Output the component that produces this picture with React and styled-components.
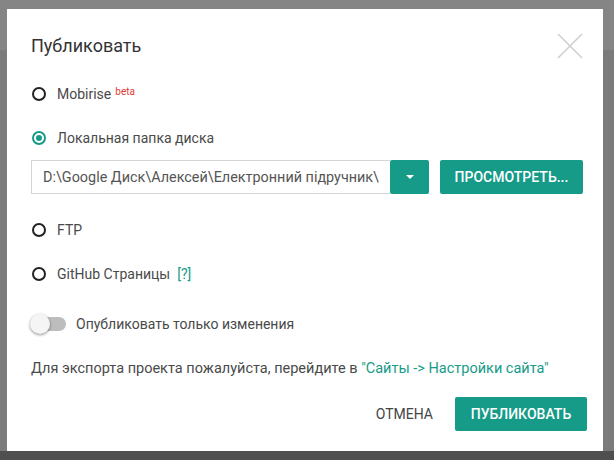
import React, { useState } from "react";
import styled, { createGlobalStyle } from "styled-components";

const GlobalStyle = createGlobalStyle`
  html, body {
    margin: 0;
    padding: 0;
  }
  body {
    font-family: Roboto, "Liberation Sans", Arial, sans-serif;
    color: #4a4a4a;
  }
`;

const TEAL = "#169b88";

const Backdrop = styled.div`
  width: 614px;
  height: 460px;
  overflow: hidden;
  padding: 9px 0 0 7px;
  box-sizing: border-box;
  background: linear-gradient(
    to bottom,
    #858585 0,
    #858585 50px,
    #7b7b7b 50px,
    #7b7b7b 451px,
    #4f4f4f 451px
  );
`;

const Dialog = styled.div`
  width: 596px;
  height: 442px;
  background: #fff;
  box-sizing: border-box;
  padding: 0 20px 0 24px;
  display: flex;
  flex-direction: column;
`;

const Header = styled.div`
  height: 61px;
  padding-top: 22px;
  box-sizing: border-box;
  display: flex;
  justify-content: space-between;
  align-items: flex-start;
`;

const Title = styled.h2`
  margin: 0;
  font-weight: 400;
  font-size: 18px;
  line-height: 30px;
  color: #333;
`;

const Close = styled.button`
  border: 0;
  background: none;
  padding: 0;
  margin-top: 2px;
  width: 26px;
  height: 26px;
  cursor: pointer;
`;

const Row = styled.div`
  display: flex;
  align-items: center;
  height: 24px;
  margin-top: ${(p) => p.$mt}px;
  font-size: ${(p) => p.$fs || 14}px;
  color: #4a4a4a;
  white-space: nowrap;
`;

const RadioCircle = styled.span`
  width: 14px;
  height: 14px;
  box-sizing: border-box;
  border-radius: 50%;
  border: 2px solid ${(p) => (p.$checked ? TEAL : "#222")};
  margin: 0 11px 0 1px;
  display: flex;
  align-items: center;
  justify-content: center;
  &::after {
    content: "";
    width: 6px;
    height: 6px;
    border-radius: 50%;
    background: ${(p) => (p.$checked ? TEAL : "transparent")};
  }
`;

const Beta = styled.sup`
  color: #e53935;
  font-size: 10px;
  margin-left: 4px;
  position: relative;
  top: -3px;
`;

const Help = styled.span`
  color: ${TEAL};
  margin-left: 7px;
`;

const PathRow = styled.div`
  display: flex;
  align-items: stretch;
  height: 34px;
  margin-top: 10px;
`;

const PathInput = styled.div`
  width: 359px;
  box-sizing: border-box;
  border: 1px solid #d5d5d5;
  border-right: 0;
  padding: 0 11px;
  display: flex;
  align-items: center;
  font-size: 14.4px;
  color: #555;
  white-space: nowrap;
  overflow: hidden;
`;

const TealButton = styled.button`
  border: 0;
  background: ${TEAL};
  color: #fff;
  font-family: inherit;
  font-weight: 500;
  font-size: 14px;
  border-radius: 2px;
  width: ${(p) => p.$w}px;
  margin-left: ${(p) => p.$ml || 0}px;
  display: flex;
  align-items: center;
  justify-content: center;
  padding: 0;
  cursor: pointer;
`;

const Caret = styled.span`
  width: 0;
  height: 0;
  border-left: 4px solid transparent;
  border-right: 4px solid transparent;
  border-top: 4px solid #fff;
`;

const Track = styled.span`
  position: relative;
  width: 35px;
  height: 14px;
  border-radius: 7px;
  background: #bdbdbd;
  margin-right: 10px;
`;

const Thumb = styled.span`
  position: absolute;
  left: -1px;
  top: -3px;
  width: 20px;
  height: 20px;
  border-radius: 50%;
  background: #f5f5f5;
  box-shadow: 0 1px 3px rgba(0, 0, 0, 0.45);
`;

const Link = styled.a`
  color: ${TEAL};
  text-decoration: none;
`;

const Footer = styled.div`
  display: flex;
  justify-content: flex-end;
  align-items: center;
  height: 34px;
  margin-top: 17px;
  margin-right: -4px;
`;

const FlatButton = styled.button`
  border: 0;
  background: none;
  font-family: inherit;
  font-size: 14px;
  color: #444;
  padding: 0;
  margin-right: 22px;
  cursor: pointer;
`;

const Radio = ({ checked, children, mt }) => (
  <Row $mt={mt}>
    <RadioCircle $checked={checked} />
    {children}
  </Row>
);

export default function App() {
  const [target, setTarget] = useState("local");

  return (
    <>
      <GlobalStyle />
      <Backdrop>
        <Dialog>
          <Header>
            <Title>Публиковать</Title>
            <Close aria-label="close">
              <svg width="26" height="26" viewBox="0 0 26 26">
                <path d="M1 1 L25 25 M25 1 L1 25" stroke="#cfcfcf" strokeWidth="1.6" fill="none" />
              </svg>
            </Close>
          </Header>

          <Radio mt={12} checked={target === "mobirise"}>
            Mobirise<Beta>beta</Beta>
          </Radio>
          <Radio mt={20} checked={target === "local"}>
            Локальная папка диска
          </Radio>
          <PathRow>
            <PathInput>D:\Google Диск\Алексей\Електронний підручник\</PathInput>
            <TealButton $w={39} onClick={() => setTarget("local")}>
              <Caret />
            </TealButton>
            <TealButton $w={143} $ml={11}>ПРОСМОТРЕТЬ...</TealButton>
          </PathRow>
          <Radio mt={24} checked={target === "ftp"}>
            FTP
          </Radio>
          <Radio mt={20} checked={target === "github"}>
            GitHub Страницы <Help>[?]</Help>
          </Radio>
          <Row $mt={26}>
            <Track>
              <Thumb />
            </Track>
            Опубликовать только изменения
          </Row>
          <Row $mt={20} $fs={14.5}>
            Для экспорта проекта пожалуйста, перейдите в&nbsp;
            <Link href="#">"Сайты -&gt; Настройки сайта"</Link>
          </Row>
          <Footer>
            <FlatButton>ОТМЕНА</FlatButton>
            <TealButton $w={132} style={{ height: 34 }}>ПУБЛИКОВАТЬ</TealButton>
          </Footer>
        </Dialog>
      </Backdrop>
    </>
  );
}
